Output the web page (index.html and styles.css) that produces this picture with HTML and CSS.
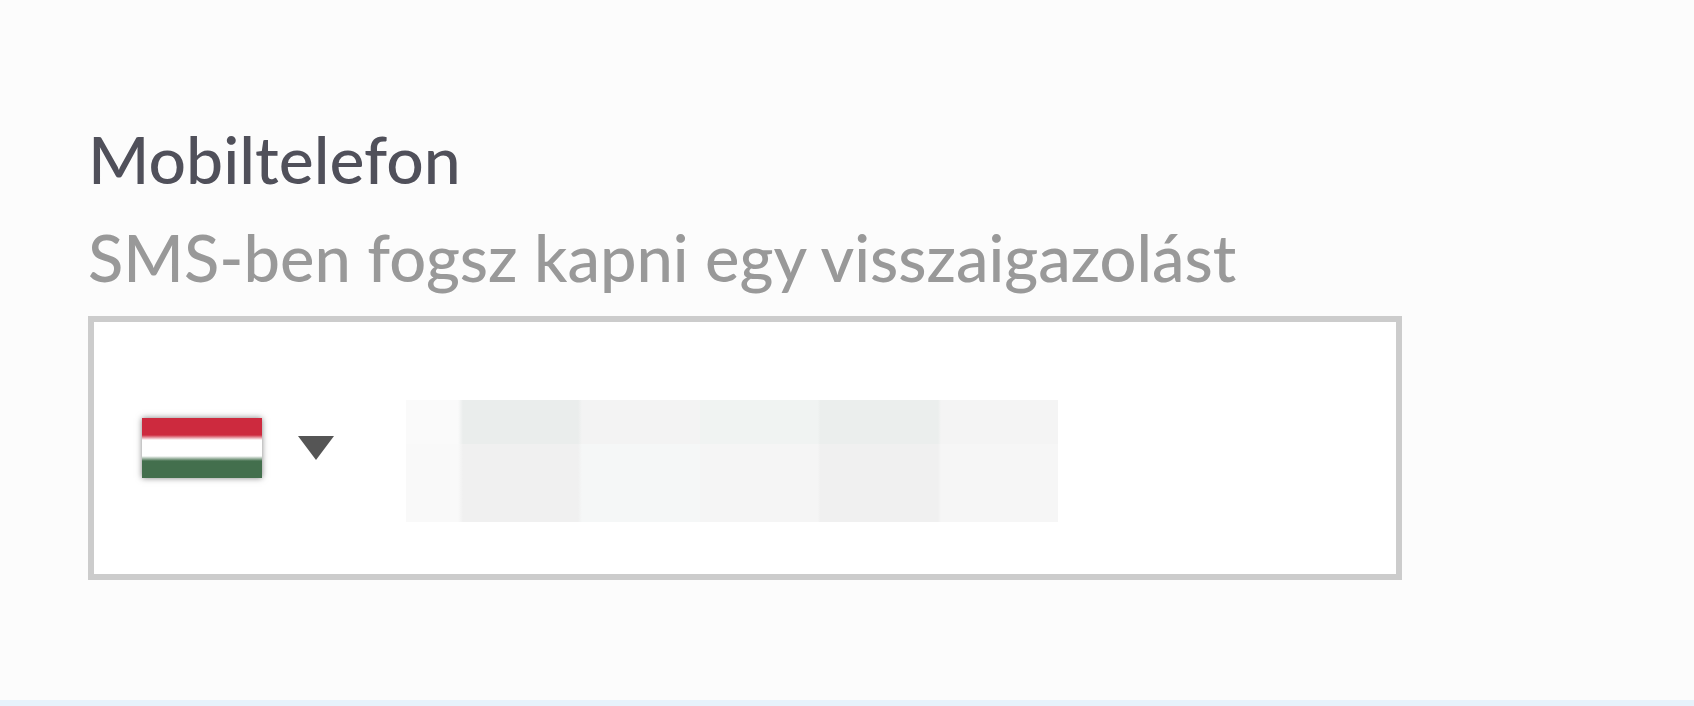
FILE: index.html
```
<!DOCTYPE html>
<html lang="hu">
<head>
    <meta charset="UTF-8">
    <meta name="viewport" content="width=device-width, initial-scale=1.0">
    <title>Mobiltelefon</title>
    <link rel="stylesheet" href="styles.css">
</head>
<body>
<form class="phone-form">
    <label class="phone-label" for="phone">Mobiltelefon</label>
    <p class="phone-hint" id="phone-hint">SMS-ben fogsz kapni egy visszaigazolást</p>
    <div class="phone-box">
        <button class="country" type="button" aria-label="Magyarország">
            <span class="flag"></span>
            <svg class="arrow" viewBox="0 0 36 24" aria-hidden="true">
                <path d="M0 0H36L18 24Z" fill="#555"/>
            </svg>
        </button>
        <input class="phone-input" id="phone" type="tel" aria-describedby="phone-hint">
    </div>
</form>
<div class="divider"></div>
</body>
</html>
```
FILE: styles.css
```
* {
    box-sizing: border-box;
}

body {
    margin: 0;
    background-color: #fcfcfc;
    font-family: Lato, "Liberation Sans", sans-serif;
    font-size: 66px;
    font-weight: 500;
    line-height: 99px;
}

.phone-form {
    padding: 109px 292px 120px 88px;
}

.phone-label {
    display: block;
    color: #50505a;
}

.phone-hint {
    margin: 0 0 9px;
    color: #999;
    font-size: 65px;
}

.phone-box {
    display: flex;
    height: 264px;
    border: 6px solid #ccc;
    background-color: #fff;
}

.country {
    display: flex;
    flex: none;
    align-items: center;
    gap: 36px;
    padding: 0 72px 0 48px;
    border: 0;
    background: none;
    cursor: pointer;
}

.flag {
    width: 120px;
    height: 60px;
    background: linear-gradient(#cd2a3e 17px, #fff 22px, #fff 38px, #436f4d 43px);
    box-shadow: 0 0 6px rgba(0, 0, 0, 0.5);
}

.arrow {
    width: 36px;
    height: 24px;
}

/* masked number: two rows of soft blocks */
.phone-input {
    flex: 1;
    min-width: 0;
    padding: 0;
    border: 0;
    outline: 0;
    color: #555;
    font: inherit;
    background-color: transparent;
    background-image:
        linear-gradient(90deg, #fafafa 52px, #eaedec 57px, #eaedec 172px, #f3f3f3 176px, #f3f3f3 294px, #f0f3f2 294px, #f0f3f2 412px, #ebeeed 414px, #ebeeed 532px, #f4f4f4 535px),
        linear-gradient(90deg, #f9f9f9 52px, #f0f0f0 57px, #f0f0f0 172px, #f5f7f7 176px, #f5f7f7 294px, #f5f5f5 294px, #f5f5f5 412px, #f0f0f0 414px, #f0f0f0 532px, #f6f6f6 535px);
    background-position: 0 78px, 0 122px;
    background-size: 652px 44px, 652px 78px;
    background-repeat: no-repeat;
}

.divider {
    height: 6px;
    background-color: #e7f2fb;
}
```
